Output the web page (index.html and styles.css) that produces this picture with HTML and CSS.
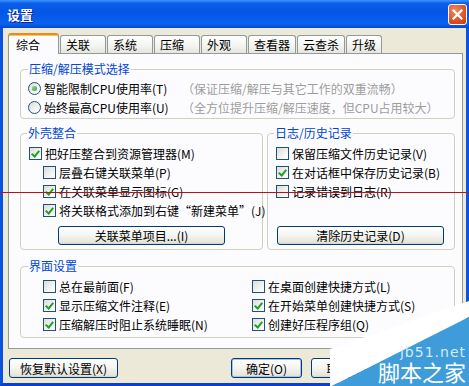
FILE: index.html
```html
<!DOCTYPE html>
<html lang="zh-CN">
<head>
    <meta charset="UTF-8">
    <meta name="viewport" content="width=device-width, initial-scale=1.0">
    <title>设置</title>
    <link rel="stylesheet" href="styles.css">
</head>
<body>
    <div class="window">
        <div class="titlebar">
            <span class="title">设置</span>
            <span class="close">
                <svg width="11" height="11" viewBox="0 0 11 11"><path d="M1.5 1.5 L9.5 9.5 M9.5 1.5 L1.5 9.5" stroke="#fff" stroke-width="2.2" stroke-linecap="square"/></svg>
            </span>
        </div>

        <div class="frame">
            <div class="tabs">
                <span class="tab active">综合</span>
                <span class="tab">关联</span>
                <span class="tab">系统</span>
                <span class="tab">压缩</span>
                <span class="tab">外观</span>
                <span class="tab">查看器</span>
                <span class="tab">云查杀</span>
                <span class="tab last">升级</span>
            </div>

            <div class="panel">
                <fieldset class="group mode">
                    <legend>压缩/解压模式选择</legend>
                    <div class="mode-row">
                        <span class="opt"><span class="radio on"></span>智能限制CPU使用率(T)</span>
                        <span class="hint">（保证压缩/解压与其它工作的双重流畅）</span>
                    </div>
                    <div class="mode-row">
                        <span class="opt"><span class="radio"></span>始终最高CPU使用率(U)</span>
                        <span class="hint">（全方位提升压缩/解压速度，但CPU占用较大）</span>
                    </div>
                </fieldset>

                <div class="pair">
                    <fieldset class="group shell">
                        <legend>外壳整合</legend>
                        <span class="opt"><span class="check on"></span>把好压整合到资源管理器(M)</span>
                        <span class="opt sub"><span class="check"></span>层叠右键关联菜单(P)</span>
                        <span class="opt sub"><span class="check on"></span>在关联菜单显示图标(G)</span>
                        <span class="opt sub"><span class="check on"></span>将关联格式添加到右键“新建菜单”(J)</span>
                        <button class="btn shell-btn">关联菜单项目...(I)</button>
                    </fieldset>

                    <fieldset class="group log">
                        <legend>日志/历史记录</legend>
                        <span class="opt"><span class="check"></span>保留压缩文件历史记录(V)</span>
                        <span class="opt"><span class="check on"></span>在对话框中保存历史记录(B)</span>
                        <span class="opt"><span class="check"></span>记录错误到日志(R)</span>
                        <button class="btn log-btn">清除历史记录(D)</button>
                    </fieldset>
                </div>

                <fieldset class="group ui">
                    <legend>界面设置</legend>
                    <div class="ui-grid">
                        <span class="opt"><span class="check"></span>总在最前面(F)</span>
                        <span class="opt"><span class="check"></span>在桌面创建快捷方式(L)</span>
                        <span class="opt"><span class="check on"></span>显示压缩文件注释(E)</span>
                        <span class="opt"><span class="check on"></span>在开始菜单创建快捷方式(S)</span>
                        <span class="opt"><span class="check on"></span>压缩解压时阻止系统睡眠(N)</span>
                        <span class="opt"><span class="check on"></span>创建好压程序组(Q)</span>
                    </div>
                </fieldset>
            </div>

            <div class="footer">
                <button class="btn reset">恢复默认设置(X)</button>
                <button class="btn ok">确定(O)</button>
                <button class="btn">取消(C)</button>
            </div>
        </div>

        <div class="redline"></div>

        <div class="watermark">
            <svg width="140" height="90" viewBox="0 0 140 90">
                <polygon points="1,53 140,5 140,21 3,90 1,90" fill="#ffffff"/>
                <polygon points="3,90 140,21 140,90" fill="#3d9cd9"/>
            </svg>
            <span class="wm-url">jb51.net</span>
            <span class="wm-name">脚本之家</span>
        </div>
    </div>
</body>
</html>
```

FILE: styles.css
```css
body {
    margin: 0;
    padding: 0;
    font-family: "Noto Sans CJK SC", "Liberation Sans", sans-serif;
    font-size: 12px;
    color: #000;
    background: #ece9d8;
}

.window {
    position: relative;
    width: 469px;
    height: 386px;
    overflow: hidden;
}

.titlebar {
    height: 28px;
    display: flex;
    align-items: center;
    padding: 0 2px 0 7px;
    background: linear-gradient(#3d95ff, #0a5fe8 12%, #0456e6 45%, #0a62f0 85%, #0347d4);
}

.title {
    color: #fff;
    font-weight: bold;
    font-size: 13px;
    text-shadow: 1px 1px 0 #0a1e8c;
}

.close {
    margin-left: auto;
    width: 17px;
    height: 19px;
    border: 1px solid #fff;
    border-radius: 3px;
    background: radial-gradient(circle at 35% 30%, #f08a64, #e0542b 55%, #c8390f);
    display: flex;
    align-items: center;
    justify-content: center;
}

.frame {
    height: 358px;
    box-sizing: border-box;
    padding: 5px 0 0 5px;
    border-left: 3px solid #0a52e0;
    border-right: 3px solid #0a52e0;
    border-bottom: 3px solid #0a3fcf;
    background: #ece9d8;
}

/* pestañas */
.tabs {
    display: flex;
    align-items: flex-end;
    height: 20px;
}

.tab {
    position: relative;
    box-sizing: border-box;
    min-width: 46px;
    height: 18px;
    margin-left: 1px;
    padding: 0 5px;
    line-height: 17px;
    border: 1px solid #919b9c;
    border-bottom: none;
    border-radius: 3px 3px 0 0;
    background: linear-gradient(#ffffff, #f3f3ef 60%, #e6e5de);
}

.tab.active {
    min-width: 51px;
    height: 21px;
    margin-left: 0;
    margin-bottom: -1px;
    padding-left: 7px;
    line-height: 19px;
    border-top: 2px solid #e68b2c;
    box-shadow: inset 0 1px 0 #ffc73c;
    background: #fcfcfe;
    z-index: 1;
}

.tab.last {
    min-width: 0;
}

.panel {
    box-sizing: border-box;
    width: 455px;
    padding: 8px 7px 10px 11px;
    border: 1px solid #919b9c;
    background: #fcfcfe;
}

/* grupos */
.group {
    margin: 0;
    min-width: 0;
    padding: 3px 7px 1px 7px;
    border: 1px solid #d0d0bf;
    border-radius: 4px;
}

.group legend {
    padding: 0 1px;
    line-height: 14px;
    color: #0046d5;
}

.mode-row {
    display: flex;
    height: 19px;
    align-items: center;
}

.mode-row .opt {
    width: 154px;
}

.hint {
    color: #9c9c9c;
}

.opt {
    display: flex;
    align-items: center;
    gap: 3px;
    height: 19px;
    white-space: nowrap;
}

.opt.sub {
    margin-left: 14px;
}

.pair {
    display: flex;
    gap: 4px;
    margin-top: 7px;
}

.shell,
.log {
    display: flex;
    flex-direction: column;
    padding: 4px 8px 4px 8px;
}

.shell {
    width: 243px;
    box-sizing: border-box;
}

.shell legend,
.log legend {
    margin-left: -2px;
}

.log {
    flex: 1;
}

.shell-btn {
    margin: 6px 0 0 29px;
    width: 167px;
}

.log-btn {
    margin: auto 0 0 1px;
    width: 167px;
}

.ui {
    margin-top: 9px;
    padding: 4px 7px 3px 7px;
}

.ui-grid {
    display: grid;
    grid-template-columns: 209px 1fr;
    padding-left: 15px;
}

/* casillas y radios estilo XP */
.check,
.radio {
    position: relative;
    flex: none;
    width: 13px;
    height: 13px;
    box-sizing: border-box;
    border: 1px solid #1c5180;
    background: linear-gradient(135deg, #dcdcd7, #fbfbf9 80%);
}

.radio {
    border-radius: 50%;
}

.check.on::after {
    content: "";
    position: absolute;
    left: 3px;
    top: 1px;
    width: 3px;
    height: 6px;
    border: solid #21a121;
    border-width: 0 2px 2px 0;
    transform: rotate(40deg);
}

.radio.on::after {
    content: "";
    position: absolute;
    left: 3px;
    top: 3px;
    width: 5px;
    height: 5px;
    border-radius: 50%;
    background: radial-gradient(circle at 35% 35%, #8fd28c, #2f9c2c);
}

/* botones */
.btn {
    box-sizing: border-box;
    height: 19px;
    padding: 0;
    font-family: inherit;
    font-size: 12px;
    color: #000;
    border: 1px solid #003c74;
    border-radius: 3px;
    background: linear-gradient(#ffffff, #f4f4f0 50%, #e6e4dc 90%, #d6d0c5);
}

.footer {
    display: flex;
    gap: 9px;
    margin-top: 9px;
    padding: 0 1px;
}

.footer .btn {
    width: 71px;
    height: 20px;
}

.footer .reset {
    width: 109px;
    margin-right: 104px;
}

.footer .ok {
    box-shadow: inset 0 0 0 1px #a6c1ef;
}

.redline {
    position: absolute;
    left: 0;
    top: 192px;
    width: 469px;
    height: 1px;
    background: #b3141c;
}

.watermark {
    position: absolute;
    right: 0;
    bottom: 0;
    width: 140px;
    height: 90px;
}

.watermark svg {
    display: block;
}

.wm-url {
    position: absolute;
    right: 3px;
    top: 49px;
    font-family: "DejaVu Sans", sans-serif;
    font-size: 14px;
    line-height: 14px;
    letter-spacing: 1px;
    color: #d5ebf8;
}

.wm-name {
    position: absolute;
    right: 3px;
    top: 64px;
    font-size: 22px;
    line-height: 22px;
    color: #fff;
}
```
